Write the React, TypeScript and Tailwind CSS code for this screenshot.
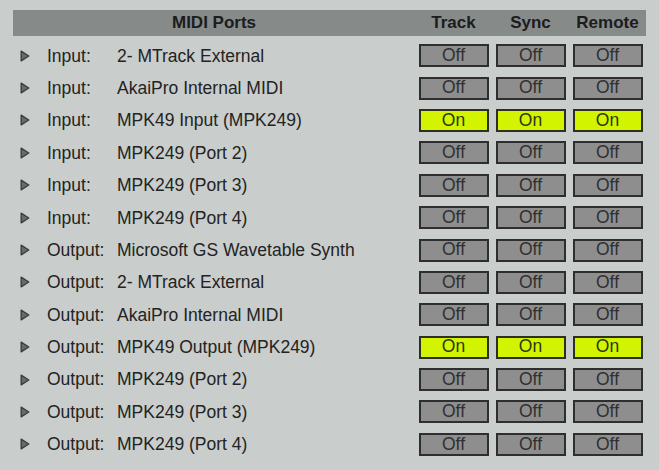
import React from "react";

interface Port {
  dir: "Input" | "Output";
  name: string;
  on: boolean;
}

const ports: Port[] = [
  { dir: "Input", name: "2- MTrack External", on: false },
  { dir: "Input", name: "AkaiPro Internal MIDI", on: false },
  { dir: "Input", name: "MPK49 Input (MPK249)", on: true },
  { dir: "Input", name: "MPK249 (Port 2)", on: false },
  { dir: "Input", name: "MPK249 (Port 3)", on: false },
  { dir: "Input", name: "MPK249 (Port 4)", on: false },
  { dir: "Output", name: "Microsoft GS Wavetable Synth", on: false },
  { dir: "Output", name: "2- MTrack External", on: false },
  { dir: "Output", name: "AkaiPro Internal MIDI", on: false },
  { dir: "Output", name: "MPK49 Output (MPK249)", on: true },
  { dir: "Output", name: "MPK249 (Port 2)", on: false },
  { dir: "Output", name: "MPK249 (Port 3)", on: false },
  { dir: "Output", name: "MPK249 (Port 4)", on: false },
];

const Toggle: React.FC<{ on: boolean }> = ({ on }) => (
  <div className="w-[77px] flex justify-center">
    <div
      className={
        on
          ? "w-[70px] h-[23px] border-2 border-[#2c2f22] bg-[#d2f400] text-[#2c3812] flex items-center justify-center text-[17.5px] leading-none"
          : "w-[70px] h-[23px] border-2 border-[#2e2e2e] bg-[#8e8e8e] text-[#303030] flex items-center justify-center text-[17.5px] leading-none"
      }
    >
      {on ? "On" : "Off"}
    </div>
  </div>
);

// little disclosure triangle at the row start
const Arrow = () => (
  <svg width="10" height="12" viewBox="0 0 10 12" className="ml-[7px] mr-[17px]">
    <path d="M1.2 1.2 L8.8 6 L1.2 10.8 Z" fill="#6a6a6a" stroke="#3e3e3e" strokeWidth="1.4" strokeLinejoin="round" />
  </svg>
);

const App: React.FC = () => {
  return (
    <div
      className="w-[659px] h-[470px] bg-[#c9cdcb] pl-[13px] pr-[13px] pt-[10px] text-[#232323]"
      style={{ fontFamily: '"Liberation Sans", Arial, sans-serif' }}
    >
      <div className="h-[26px] bg-[#868a89] flex items-center font-bold text-[17px] text-[#1c1c1c]">
        <div className="flex-1 text-center">MIDI Ports</div>
        <div className="w-[77px] text-center">Track</div>
        <div className="w-[77px] text-center">Sync</div>
        <div className="w-[77px] text-center">Remote</div>
      </div>
      <div className="mt-[3.5px]">
        {ports.map((p, i) => (
          <div key={i} className="h-[32.4px] flex items-center">
            <div className="flex-1 flex items-center text-[17.5px]">
              <Arrow />
              <span className="w-[70px]">{p.dir}:</span>
              <span>{p.name}</span>
            </div>
            <Toggle on={p.on} />
            <Toggle on={p.on} />
            <Toggle on={p.on} />
          </div>
        ))}
      </div>
    </div>
  );
};

export default App;
